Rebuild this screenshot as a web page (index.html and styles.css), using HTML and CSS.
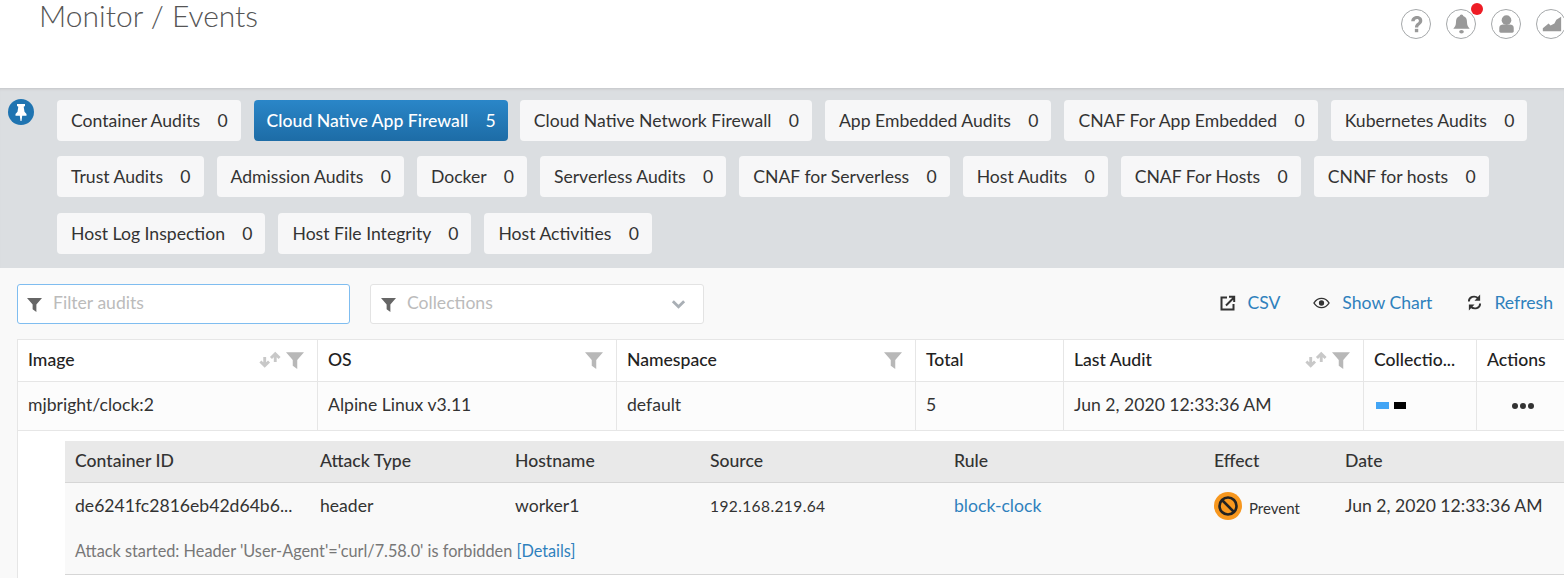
FILE: index.html
```html
<!DOCTYPE html>
<html>
  <head>
    <meta charset="utf-8" />
    <title>Monitor / Events</title>
    <link rel="stylesheet" href="styles.css">
  </head>
  <body>
    <svg class="defs" width="0" height="0">
      <symbol id="funnel" viewBox="0 0 16 16"><path d="M0 1h16L10 8v8L6 13V8z"/></symbol>
      <symbol id="sort" viewBox="0 0 24 17">
        <path d="M7 6v9M2.500 10.500 7 15l4.500-4.500" fill="none" stroke="currentColor" stroke-width="3"/>
        <path d="M18 11V3M13.500 7 18 2.500 22.500 7" fill="none" stroke="currentColor" stroke-width="3"/>
      </symbol>
    </svg>

    <header class="top">
      <h1 class="title">Monitor / Events</h1>
      <div class="top-icons">
        <span class="round-icon">
          <svg viewBox="0 0 28 28" width="27" height="27"><path d="M8.500 10.500C9 3.500 20 3.500 20 10c0 4-4.200 4.200-4.200 7h-3.400c0-4.500 4.100-4.700 4.100-7 0-2.500-4.200-2.300-4.400.700z" fill="#999"/><rect x="12.300" y="18.500" width="3.500" height="3.500" fill="#999"/></svg>
        </span>
        <span class="round-icon">
          <svg viewBox="0 0 28 28" width="27" height="27"><path d="M14 3.500c1.200 0 1.800.800 1.800 1.800 3 .900 3.900 3.300 3.900 6.200 0 3.500 1.100 5 2.800 7H5.500c1.700-2 2.800-3.500 2.800-7 0-2.900.900-5.300 3.900-6.200 0-1 .600-1.800 1.800-1.800z" fill="#999"/><ellipse cx="14" cy="21.500" rx="2.400" ry="1.800" fill="#999"/></svg>
          <span class="red-dot"></span>
        </span>
        <span class="round-icon">
          <svg viewBox="0 0 28 28" width="27" height="27"><circle cx="14" cy="9.500" r="5" fill="#999"/><path d="M6.500 21v-3.500c0-2.500 2-3.500 4-3.500h7c2 0 4 1 4 3.500V21c0 .800-.700 1.500-1.500 1.500H8c-.800 0-1.500-.700-1.500-1.500z" fill="#999"/></svg>
        </span>
        <span class="round-icon">
          <svg viewBox="0 0 28 28" width="27" height="27"><path d="M5 21v-3l6-5 2 2 4-2 2-4 5-3v15z" fill="#999"/></svg>
        </span>
      </div>
    </header>

    <section class="audit-panel">
      <span class="pin">
        <svg viewBox="0 0 26 26" width="26" height="26"><path d="M9 5h8v2l-1.300.800.800 5 2 2.200v1.700h-4.300L13.500 22h-1l-.700-5.300H7.500V15l2-2.200.800-5L9 7z" fill="#fff"/></svg>
      </span>
      <div class="chips">
        <a class="chip">Container Audits <b>0</b></a>
        <a class="chip active">Cloud Native App Firewall <b>5</b></a>
        <a class="chip">Cloud Native Network Firewall <b>0</b></a>
        <a class="chip">App Embedded Audits <b>0</b></a>
        <a class="chip">CNAF For App Embedded <b>0</b></a>
        <a class="chip">Kubernetes Audits <b>0</b></a>
        <a class="chip">Trust Audits <b>0</b></a>
        <a class="chip">Admission Audits <b>0</b></a>
        <a class="chip">Docker <b>0</b></a>
        <a class="chip">Serverless Audits <b>0</b></a>
        <a class="chip">CNAF for Serverless <b>0</b></a>
        <a class="chip">Host Audits <b>0</b></a>
        <a class="chip">CNAF For Hosts <b>0</b></a>
        <a class="chip">CNNF for hosts <b>0</b></a>
        <a class="chip">Host Log Inspection <b>0</b></a>
        <a class="chip">Host File Integrity <b>0</b></a>
        <a class="chip">Host Activities <b>0</b></a>
      </div>
    </section>

    <main class="content">
      <div class="toolbar">
        <div class="filter filter-audits">
          <svg class="filter-icon"><use href="#funnel"/></svg>
          <span>Filter audits</span>
        </div>
        <div class="filter filter-collections">
          <svg class="filter-icon"><use href="#funnel"/></svg>
          <span>Collections</span>
          <svg class="chevron" viewBox="0 0 16 10" width="15" height="10"><path d="M2 2l6 6 6-6" fill="none" stroke="#a9afb5" stroke-width="3"/></svg>
        </div>
        <div class="actions">
          <a class="action action-csv">
            <svg viewBox="0 0 16 16" width="16" height="16"><path d="M7 2.500H1.500v12h12V9M6 10.500 13.500 3M9 1.800h5.200V7" fill="none" stroke="#333" stroke-width="2"/></svg>
            CSV
          </a>
          <a class="action">
            <svg viewBox="0 0 18 12" width="17" height="12"><path d="M1 6c4-6.500 12-6.500 16 0-4 6.500-12 6.500-16 0z" fill="none" stroke="#333" stroke-width="1.500"/><circle cx="9" cy="6" r="2.800" fill="#333"/></svg>
            Show Chart
          </a>
          <a class="action">
            <svg viewBox="0 0 16 18" width="15" height="19"><path d="M2 8c0-5 6-7 10-3.500M14 10c0 5-6 7-10 3.500" fill="none" stroke="#333" stroke-width="2"/><path d="M14 .500v6.500H8zM2 17.500V11h6z" fill="#333"/></svg>
            Refresh
          </a>
        </div>
      </div>

      <div class="audit-table">
        <div class="row head">
          <div class="cell">Image
            <span class="cell-tools"><svg class="sort"><use href="#sort"/></svg><svg class="head-funnel"><use href="#funnel"/></svg></span>
          </div>
          <div class="cell">OS
            <span class="cell-tools"><svg class="head-funnel"><use href="#funnel"/></svg></span>
          </div>
          <div class="cell">Namespace
            <span class="cell-tools"><svg class="head-funnel"><use href="#funnel"/></svg></span>
          </div>
          <div class="cell">Total</div>
          <div class="cell">Last Audit
            <span class="cell-tools"><svg class="sort"><use href="#sort"/></svg><svg class="head-funnel"><use href="#funnel"/></svg></span>
          </div>
          <div class="cell">Collectio...</div>
          <div class="cell">Actions</div>
        </div>
        <div class="row body">
          <div class="cell">mjbright/clock:2</div>
          <div class="cell">Alpine Linux v3.11</div>
          <div class="cell">default</div>
          <div class="cell">5</div>
          <div class="cell">Jun 2, 2020 12:33:36 AM</div>
          <div class="cell swatches"><span class="swatch blue"></span><span class="swatch black"></span></div>
          <div class="cell dots"><i></i><i></i><i></i></div>
        </div>
        <div class="detail">
          <div class="detail-table">
            <div class="detail-row detail-head">
              <div>Container ID</div>
              <div>Attack Type</div>
              <div>Hostname</div>
              <div>Source</div>
              <div>Rule</div>
              <div>Effect</div>
              <div>Date</div>
            </div>
            <div class="detail-row detail-body">
              <div>de6241fc2816eb42d64b6...</div>
              <div>header</div>
              <div>worker1</div>
              <div class="source">192.168.219.64</div>
              <div><a class="link">block-clock</a></div>
              <div class="effect">
                <svg viewBox="0 0 28 28" width="28" height="28"><circle cx="14" cy="14" r="14" fill="#f7971e"/><circle cx="14" cy="14" r="8.500" fill="none" stroke="#222" stroke-width="2.600"/><path d="M8 8l12 12" stroke="#222" stroke-width="2.600"/></svg>
                <span>Prevent</span>
              </div>
              <div>Jun 2, 2020 12:33:36 AM</div>
            </div>
            <p class="detail-note">Attack started: Header 'User-Agent'='curl/7.58.0' is forbidden <a class="link">[Details]</a></p>
          </div>
        </div>
      </div>
    </main>
  </body>
</html>
```

FILE: styles.css
```css
html,
body {
  margin: 0;
  height: 578px;
  overflow: hidden;
}

body {
  font-family: Lato, "Open Sans", sans-serif;
  font-size: 17.6px;
  color: #333;
  background-color: #f9f9f9;
}

.defs {
  position: absolute;
}

.top {
  height: 88px;
  box-sizing: border-box;
  background-color: #fff;
  display: flex;
  justify-content: space-between;
  padding-left: 39px;
}

.title {
  margin: 0;
  font-size: 30px;
  font-weight: 300;
  line-height: 30px;
  color: #555;
}

.top-icons {
  display: flex;
  gap: 15px;
  width: 163px;
  flex-shrink: 0;
  padding-top: 9px;
}

.round-icon {
  position: relative;
  flex-shrink: 0;
  width: 30px;
  height: 30px;
  border: 1.500px solid #a5a8aa;
  border-radius: 50%;
  box-sizing: border-box;
  display: flex;
  align-items: center;
  justify-content: center;
}

.red-dot {
  position: absolute;
  top: -7px;
  right: -8px;
  width: 12px;
  height: 12px;
  border-radius: 50%;
  background-color: #ee1c25;
}

.audit-panel {
  height: 180px;
  box-sizing: border-box;
  background-color: #dbdee1;
  box-shadow: inset 0 3px 3px -2px #c3c5c7;
  display: flex;
  padding: 12px 0 0 8px;
}

.pin {
  width: 26px;
  height: 26px;
  margin: -1px 23px 0 0;
  border-radius: 50%;
  background-color: #1f74b1;
  flex-shrink: 0;
}

.chips {
  display: flex;
  flex-wrap: wrap;
  align-content: flex-start;
  gap: 15.400px 13px;
}

.chip {
  height: 41px;
  box-sizing: border-box;
  padding: 0 13px 0 14px;
  display: flex;
  align-items: center;
  background-color: #f7f7f8;
  border-radius: 4px;
  white-space: pre;
}

.chip b {
  font-weight: 400;
  margin-left: 12.800px;
}

.chip.active {
  color: #fff;
  font-weight: 500;
  padding: 0 12px 0 13px;
  margin-right: -1px;
  background: linear-gradient(#2a86c8, #1d6ca6);
}

.content {
  padding-left: 17px;
}

.toolbar {
  height: 71px;
  box-sizing: border-box;
  padding-top: 16px;
  display: flex;
}

.filter {
  height: 40px;
  box-sizing: border-box;
  display: flex;
  align-items: center;
  gap: 11px;
  padding: 0 0 3px 9px;
  background-color: #fff;
  border: 1px solid #e3e3e3;
  border-radius: 3px;
  color: #bbb;
}

.filter-audits {
  width: 333px;
  border-color: #7fbdf0;
  margin-right: 20px;
}

.filter-collections {
  width: 334px;
  padding-left: 10px;
}

.filter-icon {
  width: 15px;
  height: 15px;
  margin-top: 3px;
  fill: #666;
}

.chevron {
  margin: 3px 17px 0 auto;
}

.actions {
  margin-left: auto;
  display: flex;
  gap: 35px;
  padding-right: 11px;
  height: 37px;
  align-items: center;
}

.action {
  display: flex;
  align-items: center;
  gap: 12px;
  color: #2f81bd;
}

.action-csv {
  gap: 11px;
  margin-right: -2px;
}

.audit-table {
  width: 1560px;
  background-color: #fff;
  border-top: 1px solid #e6e6e6;
  border-left: 1px solid #e6e6e6;
}

.row {
  display: grid;
  grid-template-columns: 300px 299px 299px 148px 300px 113px 1fr;
  box-sizing: border-box;
  border-bottom: 1px solid #e6e6e6;
}

.row.head {
  height: 42px;
  font-weight: 500;
}

.row.body {
  height: 49px;
  background-color: #fcfcfc;
}

.cell {
  display: flex;
  align-items: center;
  padding: 0 10px 2px;
  border-right: 1px solid #e6e6e6;
  white-space: nowrap;
}

.row.body .cell {
  padding-bottom: 4px;
}

.head .cell {
  color: #222;
}

.cell-tools {
  margin-left: auto;
  margin-right: 3px;
  display: flex;
  align-items: center;
  gap: 5px;
  color: #c8c8c8;
}

.sort {
  width: 23px;
  height: 17px;
}

.head-funnel {
  width: 18px;
  height: 18px;
  fill: #b8b8b8;
}

.swatch {
  display: inline-block;
  width: 13px;
  height: 7px;
  margin-right: 5px;
}

.swatch.blue {
  margin-left: 2px;
  background-color: #42a5f5;
}

.swatch.black {
  width: 12px;
  background-color: #000;
}

.row.body .swatches {
  padding-bottom: 1px;
}

.row.body .dots {
  padding: 0 0 1px 35px;
  gap: 2px;
}

.dots i {
  width: 6px;
  height: 6px;
  border-radius: 50%;
  background-color: #333;
}

.detail {
  padding: 10px 0 0 47px;
  background-color: #fff;
  height: 147px;
  box-sizing: border-box;
}

.detail-table {
  background-color: #f9f9f9;
  width: 1512px;
  height: 134px;
  box-sizing: border-box;
  border-bottom: 1px solid #d6d6d6;
}

.detail-row {
  display: grid;
  grid-template-columns: 245px 195px 195px 244px 260px 131px 1fr;
  padding-left: 10px;
  align-items: center;
}

.detail-head {
  height: 42px;
  box-sizing: border-box;
  padding-bottom: 2px;
  background-color: #e9e9e9;
  border-bottom: 1px solid #d6d6d6;
  font-weight: 500;
}

.detail-body {
  height: 47px;
  box-sizing: border-box;
  padding-bottom: 3px;
}

.source {
  font-size: 15.500px;
  letter-spacing: 0.4px;
  padding-top: 1px;
}

.link {
  color: #2f81bd;
}

.effect {
  display: flex;
  align-items: center;
  gap: 7px;
  margin-top: 2px;
  font-size: 15px;
}

.effect span {
  padding-top: 3px;
}

.detail-note {
  margin: 11px 0 0;
  padding-left: 10px;
  font-size: 16.300px;
  color: #777;
}
```
